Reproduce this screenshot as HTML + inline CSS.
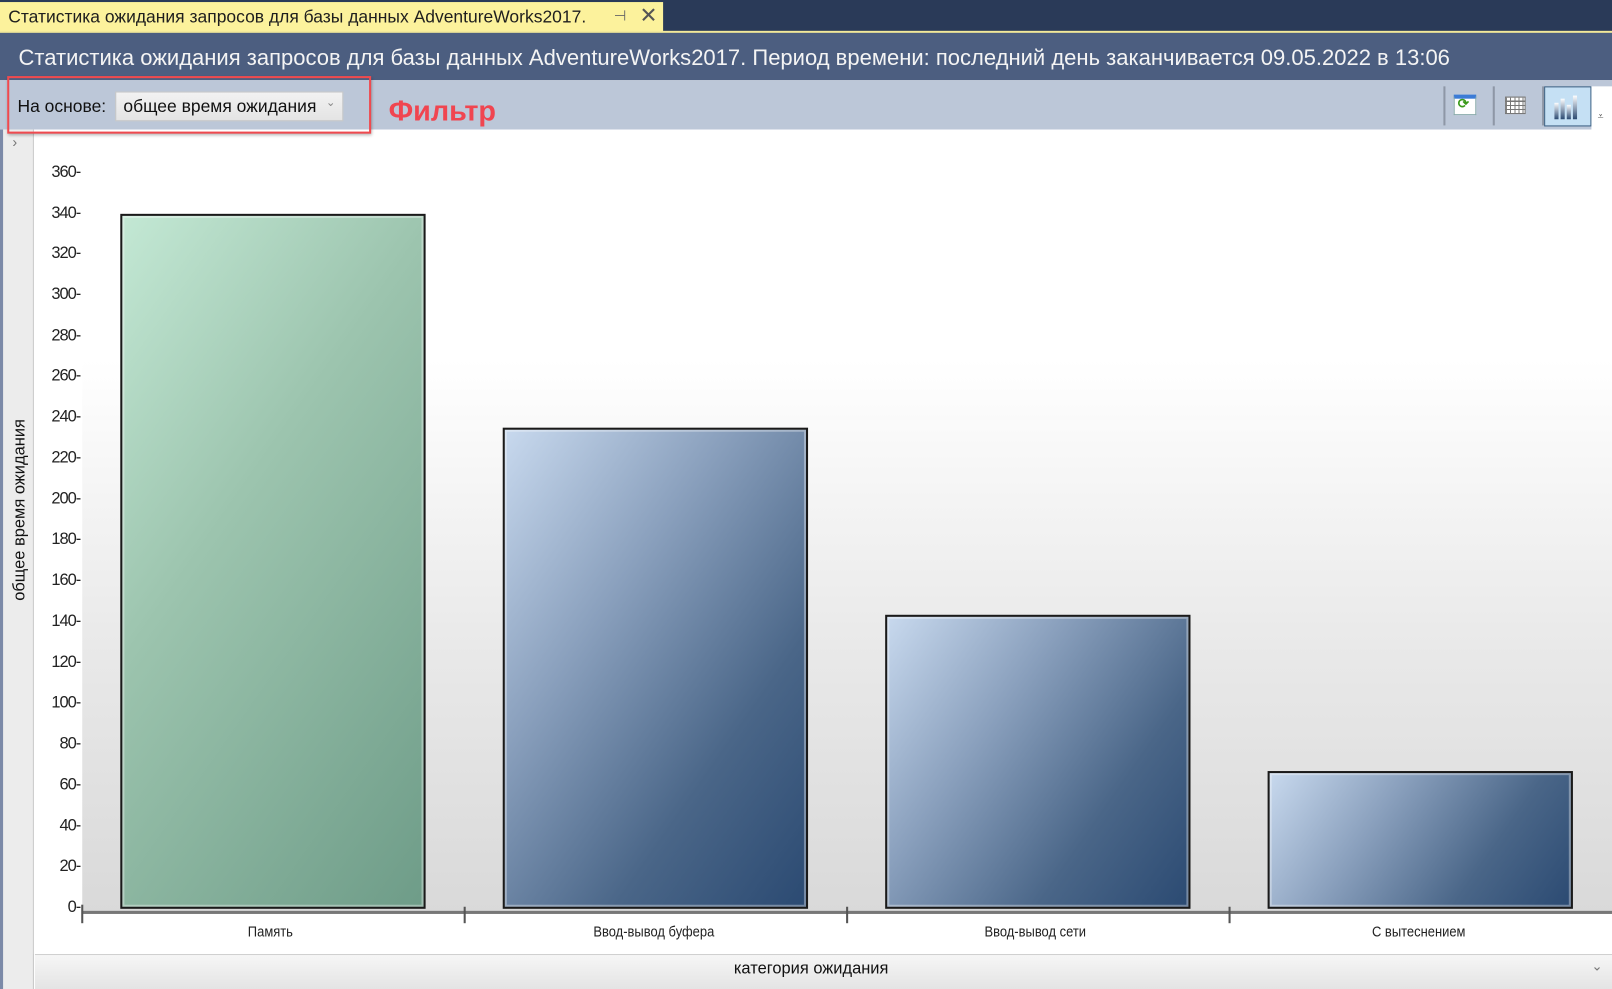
<!DOCTYPE html>
<html><head><meta charset="utf-8">
<style>
html,body{margin:0;padding:0;width:1612px;height:989px;overflow:hidden;background:#fff}
#w{position:absolute;left:0;top:0;width:1568px;height:962px;transform:scale(1.02806);transform-origin:0 0;font-family:"Liberation Sans","Noto Sans CJK SC",sans-serif}
.a{position:absolute}
.yl{position:absolute;left:30px;width:48px;text-align:right;font-size:16px;color:#222;letter-spacing:-1px;line-height:16px}
.bar{position:absolute;border:2px solid #1a1a1a;box-sizing:border-box;box-shadow:inset 0 0 0 2px rgba(255,255,255,.35)}
.g{background:linear-gradient(125deg,#c3e8d4 0%,#9cc4ae 40%,#6e9c88 100%)}
.b{background:linear-gradient(125deg,#c8d9ee 0%,#8aa0bd 35%,#4a6688 70%,#2b4a72 100%)}
.xl{position:absolute;top:898px;font-size:14px;color:#222;text-align:center;width:300px;transform:scaleX(.9)}
</style></head><body><div id="w">
<div class="a" style="left:0;top:0;width:1568px;height:32px;background:#2a3a58"></div>
<div class="a" style="left:0;top:2px;width:645px;height:29px;background:#fcf29c"></div>
<div class="a" style="left:0;top:30px;width:1568px;height:2px;background:#f3e99a"></div>
<div class="a" style="left:8px;top:7px;font-size:17px;color:#1e1e1e;white-space:nowrap">Статистика ожидания запросов для базы данных AdventureWorks2017.</div>
<div class="a" style="left:597px;top:7px;font-size:14px;color:#666">⊣</div>
<div class="a" style="left:622px;top:3px;font-size:21px;color:#555">✕</div>
<div class="a" style="left:0;top:32px;width:1568px;height:46px;background:#4c5e80"></div>
<div class="a" style="left:18px;top:43px;font-size:22px;color:#f4f4f4;white-space:nowrap;transform:scaleX(.973);transform-origin:0 0">Статистика ожидания запросов для базы данных AdventureWorks2017. Период времени: последний день заканчивается 09.05.2022 в 13:06</div>
<div class="a" style="left:0;top:78px;width:1568px;height:48px;background:#bcc7d8"></div>
<div class="a" style="left:17px;top:94px;font-size:17px;color:#111">На основе:</div>
<div class="a" style="left:112px;top:89px;width:222px;height:29px;background:linear-gradient(#f2f2f2,#e4e4e4);border:1px solid #c8c8c8;box-sizing:border-box"></div>
<div class="a" style="left:120px;top:94px;font-size:17px;color:#111">общее время ожидания</div>
<div class="a" style="left:317px;top:93px;font-size:11px;color:#888">⌄</div>
<div class="a" style="left:378px;top:92px;font-size:28px;font-weight:bold;color:#f04550">Фильтр</div>
<div class="a" style="left:1404px;top:84px;width:2px;height:38px;background:#8e97a6"></div>
<div class="a" style="left:1452px;top:84px;width:2px;height:38px;background:#8e97a6"></div>
<div class="a" style="left:1500px;top:84px;width:2px;height:38px;background:#8e97a6"></div>
<div class="a" style="left:1414px;top:92px;width:22px;height:20px;background:#fff;border:1px solid #8aa;box-sizing:border-box;border-top:4px solid #3b7bd6"></div>
<div class="a" style="left:1418px;top:93px;font-size:13px;color:#3a9a1a;font-weight:bold">⟳</div>
<div class="a" style="left:1464px;top:94px;width:20px;height:17px;background:repeating-linear-gradient(90deg,#777 0 1px,#fff 1px 4px),#fff;border:1px solid #777;box-sizing:border-box"></div>
<div class="a" style="left:1464px;top:94px;width:20px;height:17px;background:repeating-linear-gradient(0deg,#777 0 1px,transparent 1px 4px)"></div>
<div class="a" style="left:1502px;top:84px;width:46px;height:39px;background:#c5e0f4;border:1px solid #3b5e80;box-sizing:border-box"></div>
<div class="a" style="left:1512px;top:100px;width:4px;height:16px;background:linear-gradient(#fff,#2b4a72)"></div>
<div class="a" style="left:1518px;top:96px;width:4px;height:20px;background:linear-gradient(#fff,#2b4a72)"></div>
<div class="a" style="left:1524px;top:102px;width:4px;height:14px;background:linear-gradient(#fff,#2b4a72)"></div>
<div class="a" style="left:1530px;top:93px;width:4px;height:23px;background:linear-gradient(#fff,#2b4a72)"></div>
<div class="a" style="left:1548px;top:84px;width:20px;height:42px;background:#fff"></div>
<div class="a" style="left:1554px;top:108px;font-size:10px;color:#555">⩡</div>
<div class="a" style="left:0;top:126px;width:33px;height:836px;background:#ececec;border-right:1px solid #c8c8c8;box-sizing:border-box"></div>
<div class="a" style="left:0;top:126px;width:3px;height:836px;background:#7c8aa8"></div>
<div class="a" style="left:12px;top:130px;font-size:14px;color:#777">›</div>
<div class="a" style="left:33px;top:126px;width:1535px;height:802px;background:#fff"></div>
<div class="a" style="left:80px;top:140px;width:1488px;height:748px;background:linear-gradient(#fff 0%,#fff 28%,#e9e9e9 65%,#d9d9d9 100%)"></div>
<div class="a" style="left:7px;top:74px;width:354px;height:56px;border:2px solid #ef4a4f;box-sizing:border-box;box-shadow:1px 2px 3px rgba(0,0,0,.3)"></div>
<div class="a" style="left:-200px;top:487px;width:440px;text-align:center;transform:rotate(-90deg);font-size:16px;color:#111">общее время ожидания</div>
<div class="yl" style="top:160px">360-</div><div class="yl" style="top:200px">340-</div><div class="yl" style="top:239px">320-</div><div class="yl" style="top:279px">300-</div><div class="yl" style="top:319px">280-</div><div class="yl" style="top:358px">260-</div><div class="yl" style="top:398px">240-</div><div class="yl" style="top:438px">220-</div><div class="yl" style="top:478px">200-</div><div class="yl" style="top:517px">180-</div><div class="yl" style="top:557px">160-</div><div class="yl" style="top:597px">140-</div><div class="yl" style="top:637px">120-</div><div class="yl" style="top:676px">100-</div><div class="yl" style="top:716px">80-</div><div class="yl" style="top:756px">60-</div><div class="yl" style="top:796px">40-</div><div class="yl" style="top:835px">20-</div><div class="yl" style="top:875px">0-</div>
<div class="bar g" style="left:117px;top:208px;width:297px;height:676px"></div>
<div class="bar b" style="left:489px;top:416px;width:297px;height:468px"></div>
<div class="bar b" style="left:861px;top:598px;width:297px;height:286px"></div>
<div class="bar b" style="left:1233px;top:750px;width:297px;height:134px"></div>
<div class="a" style="left:80px;top:886px;width:1488px;height:3px;background:#777"></div>
<div class="a" style="left:79px;top:880px;width:2px;height:18px;background:#555"></div>
<div class="a" style="left:451px;top:882px;width:2px;height:16px;background:#555"></div>
<div class="a" style="left:823px;top:882px;width:2px;height:16px;background:#555"></div>
<div class="a" style="left:1195px;top:882px;width:2px;height:16px;background:#555"></div>
<div class="xl" style="left:113px">Память</div>
<div class="xl" style="left:486px">Ввод-вывод буфера</div>
<div class="xl" style="left:857px">Ввод-вывод сети</div>
<div class="xl" style="left:1230px">С вытеснением</div>
<div class="a" style="left:34px;top:928px;width:1534px;height:34px;background:linear-gradient(#f6f6f6,#e4e4e4);border-top:1px solid #cfcfcf;box-sizing:border-box"></div>
<div class="a" style="left:34px;top:934px;width:1510px;text-align:center;font-size:16px;color:#111">категория ожидания</div>
<div class="a" style="left:1548px;top:932px;font-size:13px;color:#777">⌄</div>
</div></body></html>
